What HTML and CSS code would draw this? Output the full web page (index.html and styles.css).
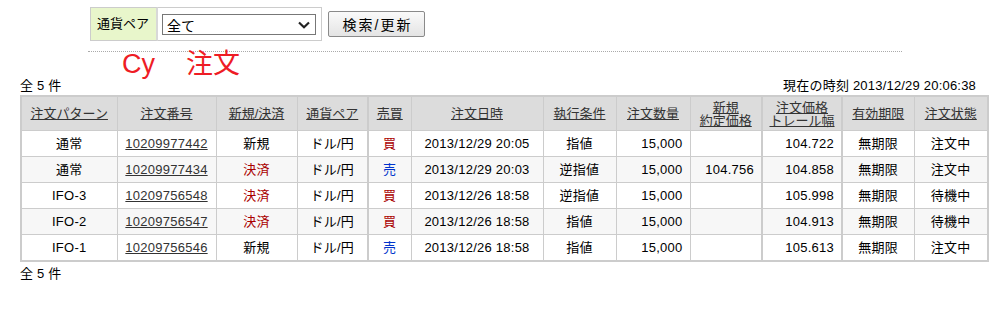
FILE: index.html
```html
<!DOCTYPE html>
<html lang="ja">
<head>
<meta charset="utf-8">
<title>注文</title>
<link rel="stylesheet" href="styles.css">
</head>
<body>
<div class="search">
  <div class="search-label">通貨ペア</div>
  <div class="search-field">
    <div class="select">
      <span>全て</span>
      <svg class="chev" width="12" height="8" viewBox="0 0 12 8"><path d="M1 1.5 L6 6.2 L11 1.5" fill="none" stroke="#222" stroke-width="2.2"/></svg>
    </div>
  </div>
  <button class="btn" type="button">検索/更新</button>
</div>
<div class="rule"></div>
<div class="title">Cy<span class="gap"></span>注文</div>
<div class="meta">
  <span>全 5 件</span>
  <span class="now">現在の時刻 2013/12/29 20:06:38</span>
</div>
<table class="orders">
  <colgroup>
    <col class="c1"><col class="c2"><col class="c3"><col class="c4"><col class="c5"><col class="c6">
    <col class="c7"><col class="c8"><col class="c9"><col class="c10"><col class="c11"><col class="c12">
  </colgroup>
  <thead>
    <tr>
      <th><a>注文パターン</a></th>
      <th><a>注文番号</a></th>
      <th><a>新規/決済</a></th>
      <th class="sep-r"><a>通貨ペア</a></th>
      <th><a>売買</a></th>
      <th><a>注文日時</a></th>
      <th><a>執行条件</a></th>
      <th><a>注文数量</a></th>
      <th class="sep-r"><a>新規<br>約定価格</a></th>
      <th class="sep-r"><a>注文価格<br>トレール幅</a></th>
      <th><a>有効期限</a></th>
      <th><a>注文状態</a></th>
    </tr>
  </thead>
  <tbody>
    <tr>
      <td>通常</td><td><a>10209977442</a></td><td>新規</td><td class="sep-r">ドル/円</td><td class="buy">買</td>
      <td>2013/12/29 20:05</td><td>指値</td><td class="num">15,000</td><td class="num sep-r"></td><td class="num sep-r">104.722</td><td>無期限</td><td>注文中</td>
    </tr>
    <tr class="alt">
      <td>通常</td><td><a>10209977434</a></td><td class="close">決済</td><td class="sep-r">ドル/円</td><td class="sell">売</td>
      <td>2013/12/29 20:03</td><td>逆指値</td><td class="num">15,000</td><td class="num sep-r">104.756</td><td class="num sep-r">104.858</td><td>無期限</td><td>注文中</td>
    </tr>
    <tr>
      <td>IFO-3</td><td><a>10209756548</a></td><td class="close">決済</td><td class="sep-r">ドル/円</td><td class="buy">買</td>
      <td>2013/12/26 18:58</td><td>逆指値</td><td class="num">15,000</td><td class="num sep-r"></td><td class="num sep-r">105.998</td><td>無期限</td><td>待機中</td>
    </tr>
    <tr class="alt">
      <td>IFO-2</td><td><a>10209756547</a></td><td class="close">決済</td><td class="sep-r">ドル/円</td><td class="buy">買</td>
      <td>2013/12/26 18:58</td><td>指値</td><td class="num">15,000</td><td class="num sep-r"></td><td class="num sep-r">104.913</td><td>無期限</td><td>待機中</td>
    </tr>
    <tr>
      <td>IFO-1</td><td><a>10209756546</a></td><td>新規</td><td class="sep-r">ドル/円</td><td class="sell">売</td>
      <td>2013/12/26 18:58</td><td>指値</td><td class="num">15,000</td><td class="num sep-r"></td><td class="num sep-r">105.613</td><td>無期限</td><td>注文中</td>
    </tr>
  </tbody>
</table>
<div class="footer">全 5 件</div>
</body>
</html>
```
FILE: styles.css
```css
html, body {
  margin: 0;
  padding: 0;
  background: #fff;
}
body {
  font-family: "Liberation Sans", "Noto Sans CJK JP", sans-serif;
  font-size: 13px;
  color: #000;
}
.search {
  display: flex;
  align-items: center;
  margin: 7px 0 0 90px;
}
.search-label {
  box-sizing: border-box;
  width: 68px;
  height: 34px;
  line-height: 32px;
  padding-left: 6px;
  background: #e8f6cb;
  border: 1px solid #cccccc;
  border-right: 2px solid #d8d8d8;
}
.search-field {
  box-sizing: border-box;
  height: 34px;
  width: 164px;
  border: 1px solid #cccccc;
  border-left: none;
  padding: 6px 5px 0 4px;
}
.select {
  box-sizing: border-box;
  display: flex;
  align-items: center;
  justify-content: space-between;
  width: 154px;
  height: 21px;
  border: 1px solid #777;
  padding: 0 5px 0 4px;
  font-size: 14px;
  background: #fff;
}
.chev { display: block; }
.btn {
  box-sizing: border-box;
  margin-left: 6px;
  width: 97px;
  height: 26px;
  padding: 0 0 0 2px;
  font-family: inherit;
  font-size: 14px;
  letter-spacing: 2px;
  color: #000;
  border: 1px solid #8a8a8a;
  border-radius: 2px;
  background: linear-gradient(#fafafa, #e4e4e4);
}
.rule {
  margin: 10px 0 0 88px;
  width: 814px;
  border-top: 1px dotted #aaa;
}
.title {
  margin-left: 122px;
  height: 26px;
  line-height: 24px;
  font-size: 27px;
  color: #ee1c25;
}
.gap { display: inline-block; width: 31px; }
.meta {
  display: flex;
  justify-content: space-between;
  margin: 0 26px 0 20px;
  height: 17px;
  line-height: 16px;
  letter-spacing: 0.2px;
}
.orders {
  margin-left: 20px;
  border-collapse: collapse;
  table-layout: fixed;
  width: 967px;
  border: 2px solid #cccccc;
}
.c1 { width: 96px; }
.c2 { width: 99px; }
.c3 { width: 81px; }
.c4 { width: 71px; }
.c5 { width: 43px; }
.c6 { width: 132px; }
.c7 { width: 73px; }
.c8 { width: 74px; }
.c9 { width: 72px; }
.c10 { width: 80px; }
.c11 { width: 72px; }
.c12 { width: 74px; }
.orders th, .orders td {
  border: 1px solid #cccccc;
  padding: 0;
  text-align: center;
  white-space: nowrap;
  overflow: hidden;
}
.orders th {
  height: 33px;
  background: #dcdcdc;
  font-weight: normal;
  line-height: 13px;
}
.orders th a, .orders td a {
  color: #333;
  text-decoration: underline;
}
.orders td {
  height: 25px;
  line-height: 16px;
  letter-spacing: 0.25px;
}
.orders .sep-r { border-right: 2px solid #cccccc; }
.orders tr.alt td { background: #f7f7f7; }
.orders td.num { text-align: right; padding-right: 7px; }
.close, .buy { color: #aa0000; }
.sell { color: #0033cc; }
.footer {
  margin: 4px 0 0 20px;
  line-height: 16px;
  letter-spacing: 0.2px;
}
```
